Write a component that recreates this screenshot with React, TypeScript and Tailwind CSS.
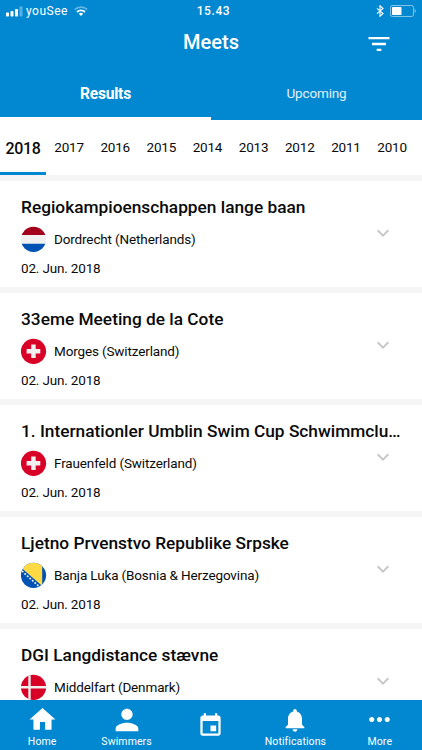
type Country = "nl" | "ch" | "ba" | "dk";

interface Meet {
    name: string;
    place: string;
    country: Country;
    date: string;
}

const years = [2017, 2016, 2015, 2014, 2013, 2012, 2011, 2010];

const meets: Meet[] = [
    { name: "Regiokampioenschappen lange baan", place: "Dordrecht (Netherlands)", country: "nl", date: "02. Jun. 2018" },
    { name: "33eme Meeting de la Cote", place: "Morges (Switzerland)", country: "ch", date: "02. Jun. 2018" },
    { name: "1. Internationler Umblin Swim Cup Schwimmclu…", place: "Frauenfeld (Switzerland)", country: "ch", date: "02. Jun. 2018" },
    { name: "Ljetno Prvenstvo Republike Srpske", place: "Banja Luka (Bosnia & Herzegovina)", country: "ba", date: "02. Jun. 2018" },
    { name: "DGI Langdistance stævne", place: "Middelfart (Denmark)", country: "dk", date: "02. Jun. 2018" },
];

function Flag({ country }: { country: Country }) {
    return (
        <svg viewBox="0 0 26 26" className="size-[26px] shrink-0">
            <clipPath id={`flag-${country}`}>
                <circle cx="12.5" cy="13.3" r="12.6" />
            </clipPath>
            <g clipPath={`url(#flag-${country})`}>
                {country === "nl" && (
                    <>
                        <path fill="#f0f0f0" d="M0 0h26v26H0z" />
                        <path fill="#a2001d" d="M0 0h26v9H0z" />
                        <path fill="#0052b4" d="M0 17.7h26V26H0z" />
                    </>
                )}
                {country === "ch" && (
                    <>
                        <path fill="#d80027" d="M0 0h26v26H0z" />
                        <path fill="#f0f0f0" d="M10.2 6.4h4.5v4.6h4.6v4.5h-4.6v4.6h-4.5v-4.6H5.6V11h4.6z" />
                    </>
                )}
                {country === "ba" && (
                    <>
                        <path fill="#0052b4" d="M0 0h26v26H0z" />
                        <path fill="#ffda44" d="M0 5.5V0h21.2v24z" />
                        <path stroke="#f0f0f0" strokeWidth="1.7" strokeDasharray="1.8 1.6" d="M1 9l17 15.5" />
                    </>
                )}
                {country === "dk" && (
                    <>
                        <path fill="#d80027" d="M0 0h26v26H0z" />
                        <path fill="#f0f0f0" d="M7.3 0h2.4v12H26v2.4H9.7V26H7.3V14.4H0V12h7.3z" />
                    </>
                )}
            </g>
        </svg>
    );
}

function MeetCard({ meet }: { meet: Meet }) {
    return (
        <div className="h-[106px] shrink-0 bg-white px-[21px] pt-[14px]">
            <h2 className="text-[17.3px]/[24px] font-medium whitespace-nowrap">{meet.name}</h2>
            <div className="mt-[7px] flex h-[26px] items-center">
                <Flag country={meet.country} />
                <span className="ml-[7px] flex-1 text-[13.5px] tracking-[-0.14px]">{meet.place}</span>
                <svg viewBox="0 0 24 24" fill="#c8c8c8" className="mr-[6px] mb-[12px] size-6">
                    <path d="M16.59 8.59L12 13.17 7.41 8.59 6 10l6 6 6-6z" />
                </svg>
            </div>
            <div className="mt-[6px] text-[13.5px]/[20px] tracking-[-0.17px]">{meet.date}</div>
        </div>
    );
}

function StatusBar() {
    return (
        <div className="grid h-[22px] grid-cols-3 items-center px-[6px] text-[12px]">
            <div className="flex items-center">
                <svg viewBox="0 0 17 11" className="h-[11px] w-[17px]" fill="white">
                    <rect x="0" y="6.5" width="3" height="4" rx="0.7" />
                    <rect x="4.5" y="5" width="3" height="5.5" rx="0.7" />
                    <rect x="9" y="3" width="3" height="7.5" rx="0.7" />
                    <rect x="13.5" y="0.5" width="3" height="10" rx="0.7" opacity="0.35" />
                </svg>
                <span className="ml-[3px] tracking-[0.5px]">youSee</span>
                <svg viewBox="0 0 14 10" className="ml-[6px] h-[10px] w-[14px]" fill="none" stroke="white" strokeWidth="1.8">
                    <path opacity="0.4" d="M.8 3.7a8.8 8.8 0 0 1 12.4 0" />
                    <path d="M3 6a5.6 5.6 0 0 1 8 0" />
                    <path fill="white" stroke="none" d="M7 10L4.8 7.8a3.1 3.1 0 0 1 4.4 0z" />
                </svg>
            </div>
            <div className="pl-[5px] text-center font-medium tracking-[0.6px]">15.43</div>
            <div className="flex items-center justify-end">
                <svg viewBox="0 0 8 12" className="mr-[6px] h-[12px] w-[8px]" fill="none" stroke="white" strokeWidth="1.1">
                    <path d="M1 3.3l6 5.2L4 11.3V.7l3 2.8-6 5.2" />
                </svg>
                <svg viewBox="0 0 26 12" className="h-[12px] w-[26px]" fill="white">
                    <rect x="0.5" y="0.5" width="23" height="11" rx="2" fill="none" stroke="white" strokeOpacity="0.5" />
                    <rect x="2" y="2" width="9.5" height="8" rx="0.8" />
                    <path opacity="0.5" d="M24.6 4c1.6.8 1.6 3.2 0 4z" />
                </svg>
            </div>
        </div>
    );
}

function App() {
    return (
        <div className="flex h-[750px] w-[422px] flex-col overflow-hidden bg-[#f5f5f5] font-['Roboto',sans-serif] text-[#0a0a0a]">
            <header className="h-[120px] shrink-0 bg-[#0288d1] text-white">
                <StatusBar />
                <div className="grid h-[44px] grid-cols-[1fr_auto_1fr] items-center">
                    <h1 className="col-start-2 -mt-[4px] text-[20px] font-medium">Meets</h1>
                    <svg viewBox="0 0 24 24" fill="currentColor" className="mr-[29px] size-[28px] justify-self-end">
                        <path d="M10 18h4v-2h-4v2zM3 6v2h18V6H3zm3 7h12v-2H6v2z" />
                    </svg>
                </div>
                <div className="grid h-[54px] grid-cols-2 text-center">
                    <div className="border-b-[3px] border-white pt-[16px] text-[15.6px]/[24px] font-bold tracking-[-0.25px]">Results</div>
                    <div className="pt-[15px] text-[13.5px]/[24px] tracking-[-0.15px] text-[#e1f1fa]">Upcoming</div>
                </div>
            </header>

            <div className="flex h-[55px] shrink-0 bg-white text-[13.5px] tracking-[-0.2px]">
                <div className="flex w-[46px] shrink-0 items-center justify-center border-b-[3px] border-[#0288d1] pt-[5px] text-[16px] font-medium tracking-[-0.4px]">
                    2018
                </div>
                {years.map((year) => (
                    <div key={year} className="flex w-[46.15px] shrink-0 items-center justify-center">
                        {year}
                    </div>
                ))}
            </div>

            <main className="mt-[6px] flex min-h-0 flex-1 flex-col gap-[6px] overflow-hidden">
                {meets.map((meet) => (
                    <MeetCard key={meet.name} meet={meet} />
                ))}
            </main>

            <nav className="grid h-[50px] shrink-0 grid-cols-5 bg-[#0288d1] text-[10.5px]/[14px] tracking-[0.1px] text-white">
                <div className="flex flex-col items-center">
                    <div className="flex h-[35px] items-center pt-[4px]">
                        <svg viewBox="0 0 24 24" fill="currentColor" className="size-[31px]">
                            <path d="M10 20v-6h4v6h5v-8h3L12 3 2 12h3v8z" />
                        </svg>
                    </div>
                    Home
                </div>
                <div className="flex flex-col items-center">
                    <div className="flex h-[35px] items-center pt-[4px]">
                        <svg viewBox="0 0 24 24" fill="currentColor" className="size-[34px]">
                            <path d="M12 12c2.21 0 4-1.79 4-4s-1.79-4-4-4-4 1.79-4 4 1.79 4 4 4zm0 2c-2.67 0-8 1.34-8 4v2h16v-2c0-2.66-5.33-4-8-4z" />
                        </svg>
                    </div>
                    Swimmers
                </div>
                <div className="flex items-center justify-center">
                    <svg viewBox="0 0 24 24" fill="currentColor" className="size-[27px]">
                        <path d="M17 12h-5v5h5v-5zM16 1v2H8V1H6v2H5c-1.11 0-1.99.9-1.99 2L3 19c0 1.1.89 2 2 2h14c1.1 0 2-.9 2-2V5c0-1.1-.9-2-2-2h-1V1h-2zm3 18H5V8h14v11z" />
                    </svg>
                </div>
                <div className="flex flex-col items-center">
                    <div className="flex h-[35px] items-center pt-[4px]">
                        <svg viewBox="0 0 24 24" fill="currentColor" className="size-[28px]">
                            <path d="M12 22c1.1 0 2-.9 2-2h-4c0 1.1.89 2 2 2zm6-6v-5c0-3.07-1.64-5.64-4.5-6.32V4c0-.83-.67-1.5-1.5-1.5s-1.5.67-1.5 1.5v.68C7.63 5.36 6 7.92 6 11v5l-2 2v1h16v-1l-2-2z" />
                        </svg>
                    </div>
                    Notifications
                </div>
                <div className="flex flex-col items-center">
                    <div className="flex h-[35px] items-center pt-[4px]">
                        <svg viewBox="0 0 24 24" fill="currentColor" className="size-[31px]">
                            <path d="M6 10c-1.1 0-2 .9-2 2s.9 2 2 2 2-.9 2-2-.9-2-2-2zm12 0c-1.1 0-2 .9-2 2s.9 2 2 2 2-.9 2-2-.9-2-2-2zm-6 0c-1.1 0-2 .9-2 2s.9 2 2 2 2-.9 2-2-.9-2-2-2z" />
                        </svg>
                    </div>
                    More
                </div>
            </nav>
        </div>
    );
}

export default App;
